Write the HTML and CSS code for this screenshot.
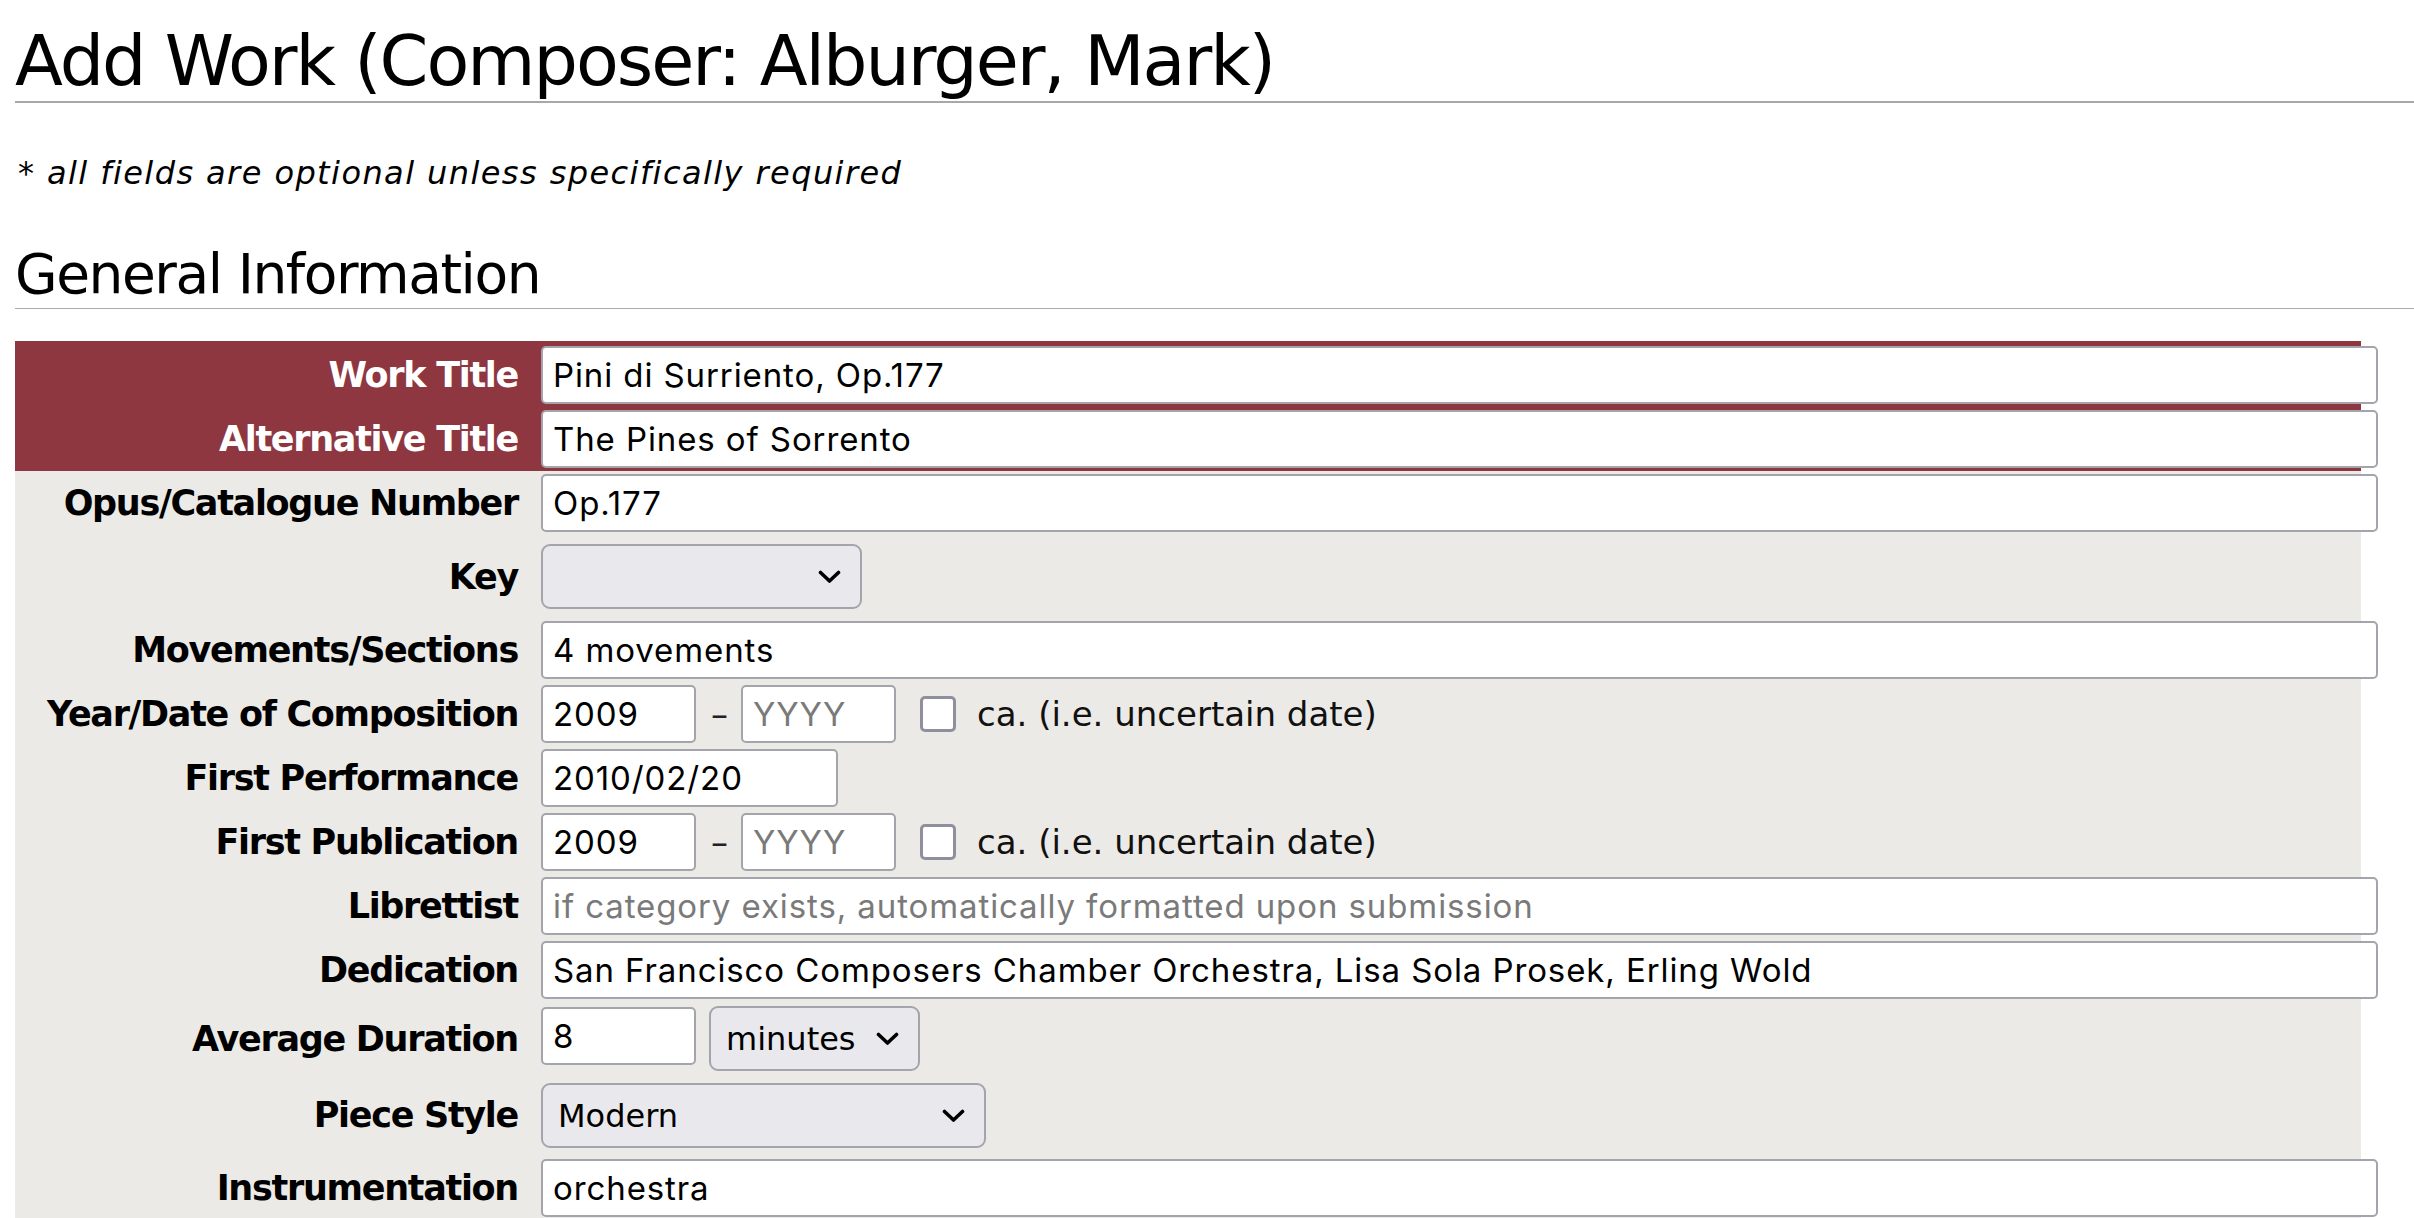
FILE: index.html
```html
<!DOCTYPE html>
<html lang="en">
<head>
<meta charset="utf-8">
<title>Add Work</title>
<link rel="stylesheet" href="styles.css">
</head>
<body>
<div class="page">
  <h1 class="title">Add Work (Composer: Alburger, Mark)</h1>
  <p class="note">* all fields are optional unless specifically required</p>
  <h2 class="section">General Information</h2>

  <div class="form">
    <div class="group group-req">
      <div class="row">
        <label class="lbl">Work Title</label>
        <div class="field"><input class="txt full" type="text" value="Pini di Surriento, Op.177"></div>
      </div>
      <div class="row">
        <label class="lbl">Alternative Title</label>
        <div class="field"><input class="txt full" type="text" value="The Pines of Sorrento"></div>
      </div>
    </div>
    <div class="group group-opt">
      <div class="row">
        <label class="lbl">Opus/Catalogue Number</label>
        <div class="field"><input class="txt full" type="text" value="Op.177"></div>
      </div>
      <div class="row">
        <label class="lbl">Key</label>
        <div class="field"><select class="sel sel-key"><option></option></select></div>
      </div>
      <div class="row">
        <label class="lbl">Movements/Sections</label>
        <div class="field"><input class="txt full" type="text" value="4 movements"></div>
      </div>
      <div class="row">
        <label class="lbl">Year/Date of Composition</label>
        <div class="field">
          <input class="txt year" type="text" value="2009">
          <span class="dash">–</span>
          <input class="txt year" type="text" placeholder="YYYY">
          <input class="chk" type="checkbox">
          <span class="chk-label">ca. (i.e. uncertain date)</span>
        </div>
      </div>
      <div class="row">
        <label class="lbl">First Performance</label>
        <div class="field"><input class="txt date" type="text" value="2010/02/20"></div>
      </div>
      <div class="row">
        <label class="lbl">First Publication</label>
        <div class="field">
          <input class="txt year" type="text" value="2009">
          <span class="dash">–</span>
          <input class="txt year" type="text" placeholder="YYYY">
          <input class="chk" type="checkbox">
          <span class="chk-label">ca. (i.e. uncertain date)</span>
        </div>
      </div>
      <div class="row">
        <label class="lbl">Librettist</label>
        <div class="field"><input class="txt full" type="text" placeholder="if category exists, automatically formatted upon submission"></div>
      </div>
      <div class="row">
        <label class="lbl">Dedication</label>
        <div class="field"><input class="txt full" type="text" value="San Francisco Composers Chamber Orchestra, Lisa Sola Prosek, Erling Wold"></div>
      </div>
      <div class="row row-dur">
        <label class="lbl">Average Duration</label>
        <div class="field field-top">
          <input class="txt year dur" type="text" value="8">
          <select class="sel sel-unit"><option>minutes</option></select>
        </div>
      </div>
      <div class="row row-style">
        <label class="lbl">Piece Style</label>
        <div class="field"><select class="sel sel-style"><option>Modern</option></select></div>
      </div>
      <div class="row">
        <label class="lbl">Instrumentation</label>
        <div class="field"><input class="txt full" type="text" value="orchestra"></div>
      </div>
    </div>
  </div>
</div>
</body>
</html>
```

FILE: styles.css
```css
html, body {
  margin: 0;
  padding: 0;
  background: #fff;
}

body {
  font-family: "DejaVu Sans", Verdana, sans-serif;
  color: #000;
}

.page {
  padding: 0 0 0 15px;
  overflow: hidden;
}

.title {
  margin: 21px 0 0;
  font-size: 70px;
  font-weight: normal;
  line-height: 80px;
  letter-spacing: -2px;
  border-bottom: 2px solid #a8a8a8;
}

.note {
  margin: 52px 0 0;
  font-size: 32px;
  font-style: italic;
  line-height: 36px;
  letter-spacing: 1.42px;
  padding-left: 3px;
}

.section {
  margin: 51px 0 0;
  font-size: 55px;
  font-weight: normal;
  line-height: 64px;
  letter-spacing: -1.45px;
  padding-bottom: 2px;
  border-bottom: 1px solid #ababab;
}

.form {
  margin-top: 32px;
  width: 2346px;
}

.group-req {
  background: #8e3740;
  padding-top: 2px;
}

.group-opt {
  background: #ebeae6;
}

.row {
  display: grid;
  grid-template-columns: 526px 1fr;
  align-items: center;
  padding: 3px 0;
}

.lbl {
  text-align: right;
  padding-right: 23px;
  font-size: 35px;
  font-weight: bold;
  letter-spacing: -1.3px;
  color: #000;
  white-space: nowrap;
}

.group-req .lbl {
  color: #fff;
}

.field {
  display: flex;
  align-items: center;
}

.field-top {
  align-items: flex-start;
}

.txt {
  box-sizing: border-box;
  height: 58px;
  margin: 0;
  padding: 0 10px;
  border: 2px solid #a4a4ac;
  border-radius: 5px;
  background: #fff;
  font-family: Inter, "Liberation Sans", sans-serif;
  font-size: 33px;
  letter-spacing: 0.9px;
  color: #000;
  outline: none;
}

.txt::placeholder {
  color: #7a7a7a;
  opacity: 1;
}

.full {
  width: 1837px;
  flex: none;
}

.year {
  width: 155px;
}

.date {
  width: 297px;
}

.dur {
  margin-top: 1px;
}

.dash {
  font-size: 34px;
  color: #222;
  margin: 0 13px 0 15px;
}

.chk {
  appearance: none;
  -webkit-appearance: none;
  box-sizing: border-box;
  width: 36px;
  height: 36px;
  margin: 0 21px 0 24px;
  border: 3px solid #8f8f9d;
  border-radius: 5px;
  background: #fff;
}

.chk-label {
  font-size: 34px;
  color: #111;
  white-space: nowrap;
}

.sel {
  appearance: none;
  -webkit-appearance: none;
  box-sizing: border-box;
  height: 65px;
  margin: 0;
  padding: 0 50px 0 15px;
  border: 2px solid #a4a4ac;
  border-radius: 9px;
  background-color: #e9e9ed;
  background-image: url("data:image/svg+xml,%3Csvg xmlns='http://www.w3.org/2000/svg' width='23' height='14' viewBox='0 0 23 14'%3E%3Cpath d='M2.5 2.5 L11.5 11 L20.5 2.5' fill='none' stroke='%23000' stroke-width='3.6' stroke-linecap='round' stroke-linejoin='round'/%3E%3C/svg%3E");
  background-repeat: no-repeat;
  background-position: right 19px center;
  font-family: "DejaVu Sans", Verdana, sans-serif;
  font-size: 32px;
  color: #000;
}

.sel-key {
  width: 321px;
  margin: 6px 0;
}

.sel-unit {
  width: 211px;
  margin-left: 13px;
}

.sel-style {
  width: 445px;
  margin: 6px 0 5px;
}

.row-dur {
  padding: 4px 0 3px;
}
```
